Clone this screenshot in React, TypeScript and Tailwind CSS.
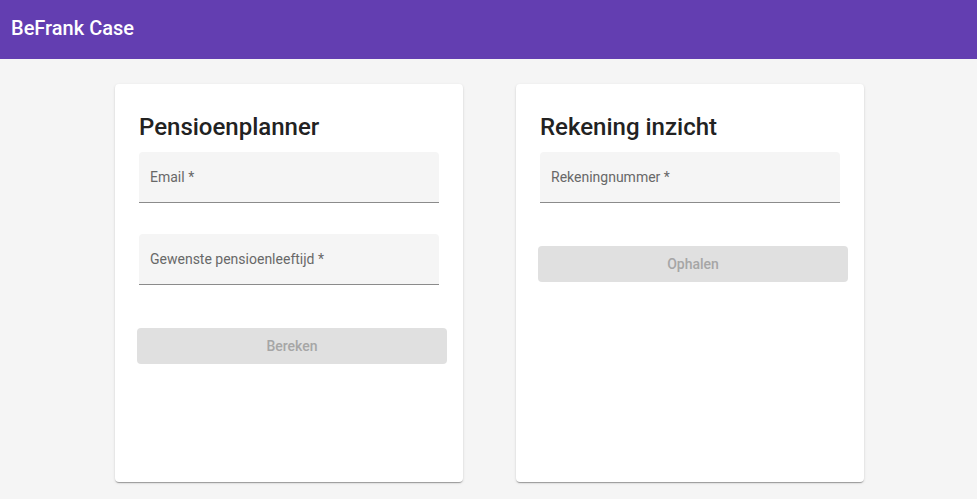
import React from "react";

function Field({ label }: { label: string }) {
  return (
    <div className="h-[51px] w-[300px] rounded-t-[4px] bg-[#f5f5f5] border-b border-[#8b8b8b] flex items-center px-[11px]">
      <span className="text-[14px] text-[#686868] leading-none">{label}</span>
    </div>
  );
}

function Btn({ label }: { label: string }) {
  return (
    <div className="ml-[-2px] h-[36px] w-[310px] rounded-[4px] bg-[#e0e0e0] flex items-center justify-center text-[14px] font-medium text-[#a6a6a6]">
      {label}
    </div>
  );
}

export default function App() {
  return (
    <div className="min-h-[499px] bg-[#f5f5f5]" style={{ fontFamily: "Roboto, 'Noto Sans', sans-serif" }}>
      <header className="h-[59px] bg-[#633eb1] flex items-center px-[11px] pb-[4px]">
        <span className="text-white text-[20px] font-medium">BeFrank Case</span>
      </header>
      <main className="flex justify-center gap-[53px] pt-[25px] pl-[2px]">
        <section className="w-[348px] h-[398px] bg-white rounded-[4px] shadow-[0_2px_1px_-1px_rgba(0,0,0,0.2),0_1px_1px_0_rgba(0,0,0,0.14),0_1px_3px_0_rgba(0,0,0,0.12)] px-[24px] pt-[27px]">
          <h2 className="text-[24px] leading-[32px] text-[#222222] font-medium mb-[9px]">Pensioenplanner</h2>
          <Field label="Email *" />
          <div className="h-[31px]" />
          <Field label="Gewenste pensioenleeftijd *" />
          <div className="h-[43px]" />
          <Btn label="Bereken" />
        </section>
        <section className="w-[348px] h-[398px] bg-white rounded-[4px] shadow-[0_2px_1px_-1px_rgba(0,0,0,0.2),0_1px_1px_0_rgba(0,0,0,0.14),0_1px_3px_0_rgba(0,0,0,0.12)] px-[24px] pt-[27px]">
          <h2 className="text-[24px] leading-[32px] text-[#222222] font-medium mb-[9px]">Rekening inzicht</h2>
          <Field label="Rekeningnummer *" />
          <div className="h-[43px]" />
          <Btn label="Ophalen" />
        </section>
      </main>
    </div>
  );
}
